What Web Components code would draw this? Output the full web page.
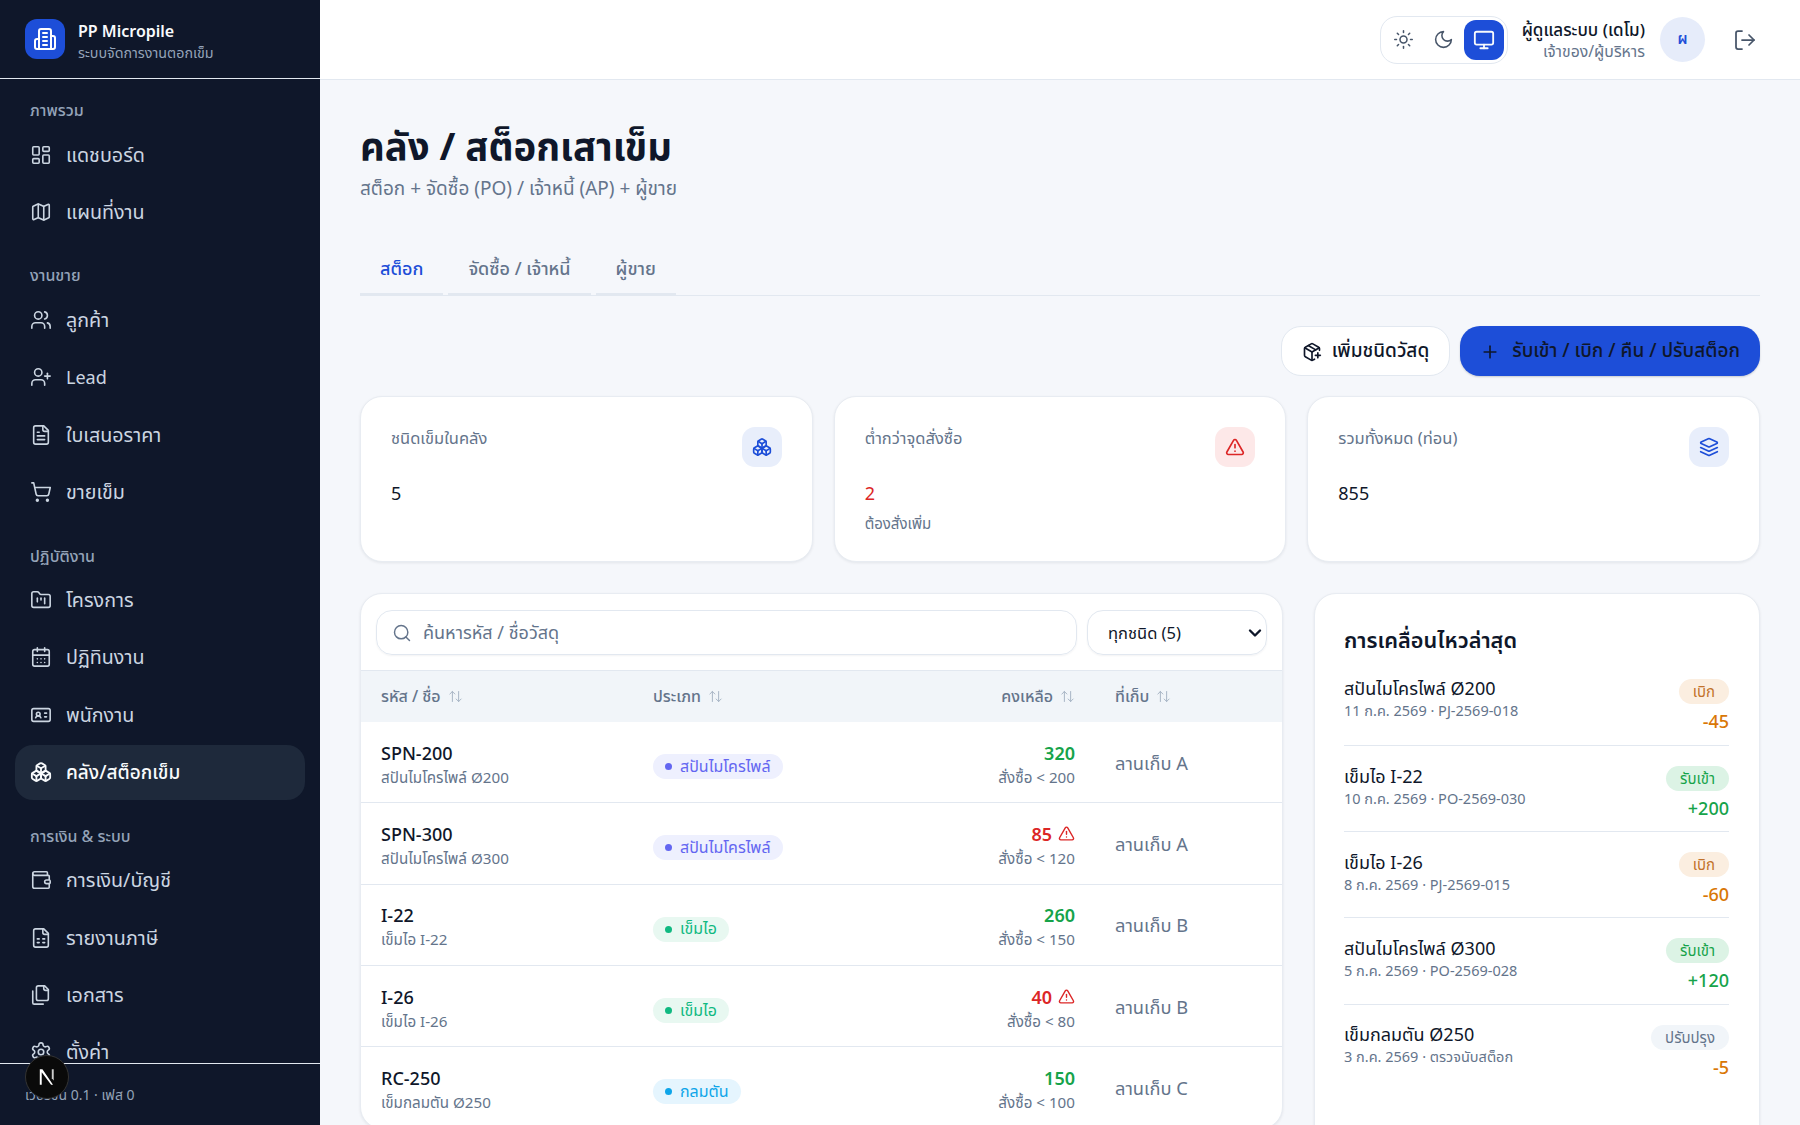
<!DOCTYPE html>
<html lang="th">
<head>
<meta charset="utf-8">
<title>คลัง / สต็อกเสาเข็ม</title>
<style>
html,body{margin:0;height:100%;overflow:hidden;}
body{font-family:"Noto Sans","Noto Sans Thai",sans-serif;color:#0f172a;background:#f5f7fb;}
</style>
</head>
<body>
<app-shell>
  <side-bar slot="side">
    <nav-group label="ภาพรวม">
      <nav-item icon="dashboard">แดชบอร์ด</nav-item>
      <nav-item icon="map">แผนที่งาน</nav-item>
    </nav-group>
    <nav-group label="งานขาย">
      <nav-item icon="users">ลูกค้า</nav-item>
      <nav-item icon="userplus" style="font-size:18px">Lead</nav-item>
      <nav-item icon="filetext">ใบเสนอราคา</nav-item>
      <nav-item icon="cart">ขายเข็ม</nav-item>
    </nav-group>
    <nav-group label="ปฏิบัติงาน">
      <nav-item icon="kanban">โครงการ</nav-item>
      <nav-item icon="calendar">ปฏิทินงาน</nav-item>
      <nav-item icon="idcard">พนักงาน</nav-item>
      <nav-item icon="boxes" active>คลัง/สต็อกเข็ม</nav-item>
    </nav-group>
    <nav-group label="การเงิน &amp; ระบบ">
      <nav-item icon="wallet">การเงิน/บัญชี</nav-item>
      <nav-item icon="sheet">รายงานภาษี</nav-item>
      <nav-item icon="files">เอกสาร</nav-item>
      <nav-item icon="settings">ตั้งค่า</nav-item>
    </nav-group>
  </side-bar>
  <top-bar slot="top"></top-bar>
  <page-head title="คลัง / สต็อกเสาเข็ม" sub="สต็อก + จัดซื้อ (PO) / เจ้าหนี้ (AP) + ผู้ขาย"></page-head>
  <tab-bar></tab-bar>
  <action-bar></action-bar>
  <kpi-row>
    <kpi-card label="ชนิดเข็มในคลัง" value="5" icon="boxes" tone="blue"></kpi-card>
    <kpi-card label="ต่ำกว่าจุดสั่งซื้อ" value="2" sub="ต้องสั่งเพิ่ม" icon="alert" tone="red"></kpi-card>
    <kpi-card label="รวมทั้งหมด (ท่อน)" value="855" icon="layers" tone="blue"></kpi-card>
  </kpi-row>
  <split-row>
    <stock-table>
      <stock-row code="SPN-200" name="สปันไมโครไพล์ Ø200" kind="สปันไมโครไพล์" tone="violet" qty="320" min="สั่งซื้อ &lt; 200" place="ลานเก็บ A"></stock-row>
      <stock-row code="SPN-300" name="สปันไมโครไพล์ Ø300" kind="สปันไมโครไพล์" tone="violet" qty="85" low min="สั่งซื้อ &lt; 120" place="ลานเก็บ A"></stock-row>
      <stock-row code="I-22" name="เข็มไอ I-22" kind="เข็มไอ" tone="green" qty="260" min="สั่งซื้อ &lt; 150" place="ลานเก็บ B"></stock-row>
      <stock-row code="I-26" name="เข็มไอ I-26" kind="เข็มไอ" tone="green" qty="40" low min="สั่งซื้อ &lt; 80" place="ลานเก็บ B"></stock-row>
      <stock-row code="RC-250" name="เข็มกลมตัน Ø250" kind="กลมตัน" tone="sky" qty="150" min="สั่งซื้อ &lt; 100" place="ลานเก็บ C"></stock-row>
    </stock-table>
    <move-list>
      <move-item name="สปันไมโครไพล์ Ø200" meta="11 ก.ค. 2569 · PJ-2569-018" tag="เบิก" tone="out" amount="-45"></move-item>
      <move-item name="เข็มไอ I-22" meta="10 ก.ค. 2569 · PO-2569-030" tag="รับเข้า" tone="in" amount="+200"></move-item>
      <move-item name="เข็มไอ I-26" meta="8 ก.ค. 2569 · PJ-2569-015" tag="เบิก" tone="out" amount="-60"></move-item>
      <move-item name="สปันไมโครไพล์ Ø300" meta="5 ก.ค. 2569 · PO-2569-028" tag="รับเข้า" tone="in" amount="+120"></move-item>
      <move-item name="เข็มกลมตัน Ø250" meta="3 ก.ค. 2569 · ตรวจนับสต็อก" tag="ปรับปรุง" tone="adj" amount="-5"></move-item>
    </move-list>
  </split-row>
</app-shell>

<script>
const ICONS = {
  dashboard:'<rect width="7" height="9" x="3" y="3" rx="1"/><rect width="7" height="5" x="14" y="3" rx="1"/><rect width="7" height="9" x="14" y="12" rx="1"/><rect width="7" height="5" x="3" y="16" rx="1"/>',
  map:'<path d="M14.106 5.553a2 2 0 0 0 1.788 0l3.659-1.83A1 1 0 0 1 21 4.619v12.764a1 1 0 0 1-.553.894l-4.553 2.277a2 2 0 0 1-1.788 0l-4.212-2.106a2 2 0 0 0-1.788 0l-3.659 1.83A1 1 0 0 1 3 19.381V6.618a1 1 0 0 1 .553-.894l4.553-2.277a2 2 0 0 1 1.788 0z"/><path d="M15 5.764v15"/><path d="M9 3.236v15"/>',
  users:'<path d="M16 21v-2a4 4 0 0 0-4-4H6a4 4 0 0 0-4 4v2"/><circle cx="9" cy="7" r="4"/><path d="M22 21v-2a4 4 0 0 0-3-3.87"/><path d="M16 3.13a4 4 0 0 1 0 7.75"/>',
  userplus:'<path d="M16 21v-2a4 4 0 0 0-4-4H6a4 4 0 0 0-4 4v2"/><circle cx="9" cy="7" r="4"/><line x1="19" x2="19" y1="8" y2="14"/><line x1="22" x2="16" y1="11" y2="11"/>',
  filetext:'<path d="M15 2H6a2 2 0 0 0-2 2v16a2 2 0 0 0 2 2h12a2 2 0 0 0 2-2V7Z"/><path d="M14 2v4a2 2 0 0 0 2 2h4"/><path d="M10 9H8"/><path d="M16 13H8"/><path d="M16 17H8"/>',
  cart:'<circle cx="8" cy="21" r="1"/><circle cx="19" cy="21" r="1"/><path d="M2.05 2.05h2l2.66 12.42a2 2 0 0 0 2 1.58h9.78a2 2 0 0 0 1.95-1.57l1.65-7.43H5.12"/>',
  kanban:'<path d="M4 20h16a2 2 0 0 0 2-2V8a2 2 0 0 0-2-2h-7.93a2 2 0 0 1-1.66-.9l-.82-1.2A2 2 0 0 0 7.93 3H4a2 2 0 0 0-2 2v13c0 1.1.9 2 2 2Z"/><path d="M8 10v4"/><path d="M12 10v2"/><path d="M16 10v6"/>',
  calendar:'<path d="M8 2v4"/><path d="M16 2v4"/><rect width="18" height="18" x="3" y="4" rx="2"/><path d="M3 10h18"/><path d="M8 14h.01"/><path d="M12 14h.01"/><path d="M16 14h.01"/><path d="M8 18h.01"/><path d="M12 18h.01"/><path d="M16 18h.01"/>',
  idcard:'<path d="M16 10h2"/><path d="M16 14h2"/><path d="M6.17 15a3 3 0 0 1 5.66 0"/><circle cx="9" cy="11" r="2"/><rect x="2" y="5" width="20" height="14" rx="2"/>',
  boxes:'<path d="M2.97 12.92A2 2 0 0 0 2 14.63v3.24a2 2 0 0 0 .97 1.71l3 1.8a2 2 0 0 0 2.06 0L12 19v-5.5l-5-3-4.03 2.42Z"/><path d="m7 16.5-4.74-2.85"/><path d="m7 16.5 5-3"/><path d="M7 16.5v5.17"/><path d="M12 13.5V19l3.97 2.38a2 2 0 0 0 2.06 0l3-1.8a2 2 0 0 0 .97-1.71v-3.24a2 2 0 0 0-.97-1.71L17 10.5l-5 3Z"/><path d="m17 16.5-5-3"/><path d="m17 16.5 4.74-2.85"/><path d="M17 16.5v5.17"/><path d="M7.97 4.42A2 2 0 0 0 7 6.13v4.37l5 3 5-3V6.13a2 2 0 0 0-.97-1.71l-3-1.8a2 2 0 0 0-2.06 0l-3 1.8Z"/><path d="M12 8 7.26 5.15"/><path d="m12 8 4.74-2.85"/><path d="M12 13.5V8"/>',
  wallet:'<path d="M19 7V4a1 1 0 0 0-1-1H5a2 2 0 0 0 0 4h15a1 1 0 0 1 1 1v4h-3a2 2 0 0 0 0 4h3a1 1 0 0 0 1-1v-2a1 1 0 0 0-1-1"/><path d="M3 5v14a2 2 0 0 0 2 2h15a1 1 0 0 0 1-1v-4"/>',
  sheet:'<path d="M15 2H6a2 2 0 0 0-2 2v16a2 2 0 0 0 2 2h12a2 2 0 0 0 2-2V7Z"/><path d="M14 2v4a2 2 0 0 0 2 2h4"/><path d="M8 13h2"/><path d="M14 13h2"/><path d="M8 17h2"/><path d="M14 17h2"/>',
  files:'<path d="M20 7h-3a2 2 0 0 1-2-2V2"/><path d="M9 18a2 2 0 0 1-2-2V4a2 2 0 0 1 2-2h7l4 4v10a2 2 0 0 1-2 2Z"/><path d="M3 7.6v12.8A1.6 1.6 0 0 0 4.6 22h9.8"/>',
  settings:'<path d="M12.22 2h-.44a2 2 0 0 0-2 2v.18a2 2 0 0 1-1 1.73l-.43.25a2 2 0 0 1-2 0l-.15-.08a2 2 0 0 0-2.73.73l-.22.38a2 2 0 0 0 .73 2.73l.15.1a2 2 0 0 1 1 1.72v.51a2 2 0 0 1-1 1.74l-.15.09a2 2 0 0 0-.73 2.73l.22.38a2 2 0 0 0 2.73.73l.15-.08a2 2 0 0 1 2 0l.43.25a2 2 0 0 1 1 1.73V20a2 2 0 0 0 2 2h.44a2 2 0 0 0 2-2v-.18a2 2 0 0 1 1-1.73l.43-.25a2 2 0 0 1 2 0l.15.08a2 2 0 0 0 2.73-.73l.22-.39a2 2 0 0 0-.73-2.73l-.15-.08a2 2 0 0 1-1-1.74v-.5a2 2 0 0 1 1-1.74l.15-.09a2 2 0 0 0 .73-2.73l-.22-.38a2 2 0 0 0-2.73-.73l-.15.08a2 2 0 0 1-2 0l-.43-.25a2 2 0 0 1-1-1.73V4a2 2 0 0 0-2-2z"/><circle cx="12" cy="12" r="3"/>',
  building:'<path d="M6 22V4a2 2 0 0 1 2-2h8a2 2 0 0 1 2 2v18Z"/><path d="M6 12H4a2 2 0 0 0-2 2v6a2 2 0 0 0 2 2h2"/><path d="M18 9h2a2 2 0 0 1 2 2v9a2 2 0 0 1-2 2h-2"/><path d="M10 6h4"/><path d="M10 10h4"/><path d="M10 14h4"/><path d="M10 18h4"/>',
  sun:'<circle cx="12" cy="12" r="4"/><path d="M12 2v2"/><path d="M12 20v2"/><path d="m4.93 4.93 1.41 1.41"/><path d="m17.66 17.66 1.41 1.41"/><path d="M2 12h2"/><path d="M20 12h2"/><path d="m6.34 17.66-1.41 1.41"/><path d="m19.07 4.93-1.41 1.41"/>',
  moon:'<path d="M12 3a6 6 0 0 0 9 9 9 9 0 1 1-9-9Z"/>',
  monitor:'<rect width="20" height="14" x="2" y="3" rx="2"/><line x1="8" x2="16" y1="21" y2="21"/><line x1="12" x2="12" y1="17" y2="21"/>',
  logout:'<path d="M9 21H5a2 2 0 0 1-2-2V5a2 2 0 0 1 2-2h4"/><polyline points="16 17 21 12 16 7"/><line x1="21" x2="9" y1="12" y2="12"/>',
  packageplus:'<path d="M16 16h6"/><path d="M19 13v6"/><path d="M21 10V8a2 2 0 0 0-1-1.73l-7-4a2 2 0 0 0-2 0l-7 4A2 2 0 0 0 3 8v8a2 2 0 0 0 1 1.73l7 4a2 2 0 0 0 2 0l2-1.14"/><path d="m7.5 4.27 9 5.15"/><polyline points="3.29 7 12 12 20.71 7"/><line x1="12" x2="12" y1="22" y2="12"/>',
  plus:'<path d="M5 12h14"/><path d="M12 5v14"/>',
  alert:'<path d="m21.73 18-8-14a2 2 0 0 0-3.48 0l-8 14A2 2 0 0 0 4 21h16a2 2 0 0 0 1.73-3"/><path d="M12 9v4"/><path d="M12 17h.01"/>',
  layers:'<path d="m12.83 2.18a2 2 0 0 0-1.66 0L2.6 6.08a1 1 0 0 0 0 1.83l8.58 3.91a2 2 0 0 0 1.66 0l8.58-3.9a1 1 0 0 0 0-1.83Z"/><path d="m22 17.65-9.17 4.16a2 2 0 0 1-1.66 0L2 17.65"/><path d="m22 12.65-9.17 4.16a2 2 0 0 1-1.66 0L2 12.65"/>',
  search:'<circle cx="11" cy="11" r="8"/><path d="m21 21-4.3-4.3"/>',
  sort:'<path d="m21 16-4 4-4-4"/><path d="M17 20V4"/><path d="m3 8 4-4 4 4"/><path d="M7 4v16"/>'
};

// small helper, every element below is just a shadow root + a string of markup
function svg(name, size, sw){
  return `<svg width="${size}" height="${size}" viewBox="0 0 24 24" fill="none" stroke="currentColor" stroke-width="${sw||2}" stroke-linecap="round" stroke-linejoin="round" style="display:block;flex:none">${ICONS[name]}</svg>`;
}

class Base extends HTMLElement{
  constructor(){
    super();
    this.attachShadow({mode:"open"});
  }
  connectedCallback(){
    this.shadowRoot.innerHTML = this.render();
  }
  a(n){ return this.getAttribute(n) || ""; }
}

class AppShell extends Base{
  render(){ return `<style>
    :host{display:grid;grid-template-columns:320px 1fr;grid-template-rows:80px 1fr;height:100vh;overflow:hidden;}
    .side{grid-row:1 / 3;min-height:0;display:flex}
    .top{min-width:0}
    main{min-height:0;overflow:hidden;padding:40px 40px 0;}
  </style>
  <div class="side"><slot name="side"></slot></div>
  <div class="top"><slot name="top"></slot></div>
  <main><slot></slot></main>`; }
}

class SideBar extends Base{
  render(){ return `<style>
    :host{display:flex;flex-direction:column;width:320px;height:100%;background:#0f172a;position:relative;}
    header{height:79px;box-sizing:border-box;flex:none;display:flex;align-items:center;gap:13px;padding:0 25px;border-bottom:1px solid #e2e8f0;}
    .logo{width:40px;height:40px;border-radius:12px;background:#1d4ed8;color:#fff;display:flex;align-items:center;justify-content:center;}
    .txt{padding-top:3px}
    .t{font-size:16px;font-weight:600;color:#f8fafc;line-height:23px;}
    .s{font-size:14.3px;color:#94a3b8;line-height:19px;}
    nav{flex:1;min-height:0;overflow:hidden;padding:19px 15px 0;}
    footer{height:62px;flex:none;box-sizing:border-box;border-top:1px solid #e2e8f0;padding:16px 25px 0;font-size:14px;line-height:30px;color:#94a3b8;}
    .n{position:absolute;left:25px;top:1055px;width:44px;height:44px;border-radius:50%;background:#0a0a0a;border:1px solid #333;box-sizing:border-box;display:flex;align-items:center;justify-content:center;}
  </style>
  <header><div class="logo">${svg("building",24)}</div><div class="txt"><div class="t">PP Micropile</div><div class="s">ระบบจัดการงานตอกเข็ม</div></div></header>
  <nav><slot></slot></nav>
  <footer>เวอร์ชัน 0.1 · เฟส 0</footer>
  <div class="n"><svg width="24" height="24" viewBox="0 0 20 20"><path d="M4 3.5h2.2L15 16.5h-1.6L5.6 6v10.5H4z" fill="#fff"/><path d="M14 3.5h1.6v9.5L14 11z" fill="#ccc"/></svg></div>`; }
}

class NavGroup extends Base{
  render(){ return `<style>
    :host{display:block;margin-bottom:24px;}
    .l{font-size:16px;font-weight:500;line-height:24px;color:#94a3b8;padding-left:15px;margin-bottom:5px;}
    .i{display:flex;flex-direction:column;gap:2.4px;}
  </style><div class="l">${this.a("label")}</div><div class="i"><slot></slot></div>`; }
}

class NavItem extends Base{
  render(){
    const on = this.hasAttribute("active");
    return `<style>
    :host{display:flex;align-items:center;gap:14px;height:55px;padding:0 15px;border-radius:18px;font-size:${on?19:19.7}px;line-height:28px;
      color:${on?"#f8fafc":"#cbd5e1"};background:${on?"#1e293b":"transparent"};font-weight:${on?500:400};}
  </style>${svg(this.a("icon"),22,on?2:1.75)}<span><slot></slot></span>`; }
}

class TopBar extends Base{
  render(){ return `<style>
    :host{display:flex;align-items:center;justify-content:flex-end;height:80px;box-sizing:border-box;background:#fff;border-bottom:1px solid #e2e8f0;padding:0 43px 0 0;}
    .theme{display:flex;align-items:center;padding:3px;height:48px;box-sizing:border-box;border:1px solid #e2e8f0;border-radius:17px;color:#475569;background:#fff;}
    .theme span{width:40px;height:40px;display:flex;align-items:center;justify-content:center;border-radius:12px;}
    .theme .on{background:#1d4ed8;color:#f8fafc;}
    .who{text-align:right;margin-left:14px;}
    .who b{display:block;font-size:17px;font-weight:500;line-height:23px;color:#0f172a;}
    .who i{display:block;font-style:normal;font-size:15.8px;line-height:21px;color:#64748b;}
    .av{width:45px;height:45px;border-radius:50%;background:#e6ecfa;color:#1d4ed8;font-size:15px;font-weight:600;display:flex;align-items:center;justify-content:center;margin-left:15px;}
    .out{margin-left:28px;color:#475569;}
  </style>
  <div class="theme"><span>${svg("sun",21,1.75)}</span><span>${svg("moon",21,1.75)}</span><span class="on">${svg("monitor",22)}</span></div>
  <div class="who"><b>ผู้ดูแลระบบ (เดโม)</b><i>เจ้าของ/ผู้บริหาร</i></div>
  <div class="av">ผ</div>
  <div class="out">${svg("logout",24,1.75)}</div>`; }
}

class PageHead extends Base{
  render(){ return `<style>
    :host{display:block;}
    h1{margin:0;font-size:38.3px;font-weight:700;line-height:50px;color:#0f172a;}
    p{margin:4px 0 0;font-size:19px;line-height:28px;color:#64748b;}
  </style><h1>${this.a("title")}</h1><p>${this.a("sub")}</p>`; }
}

class TabBar extends Base{
  render(){ return `<style>
    :host{display:flex;gap:5px;height:51px;margin-top:43px;box-shadow:inset 0 -1px 0 #e2e8f0;}
    div{padding:0 20px;font-size:18px;line-height:47px;color:#64748b;font-weight:500;height:48px;border-bottom:3px solid #e2e8f0;}
    .on{color:#1d4ed8;}
  </style><div class="on">สต็อก</div><div>จัดซื้อ / เจ้าหนี้</div><div>ผู้ขาย</div>`; }
}

class ActionBar extends Base{
  render(){ return `<style>
    :host{display:flex;justify-content:flex-end;gap:10px;margin-top:30px;}
    div{display:flex;align-items:center;height:50px;box-sizing:border-box;border-radius:20px;font-size:19px;font-weight:500;white-space:nowrap;padding-top:1px;}
    .a{background:#fff;border:1px solid #e2e8f0;padding-left:20px;padding-right:20px;gap:10px;color:#0f172a;}
    .b{background:#1d4ed8;padding-left:20px;padding-right:20px;gap:12px;color:#0f172a;box-shadow:0 1px 2px rgba(15,23,42,.2);}
  </style><div class="a">${svg("packageplus",20)}เพิ่มชนิดวัสดุ</div><div class="b">${svg("plus",20)}รับเข้า / เบิก / คืน / ปรับสต็อก</div>`; }
}

class KpiRow extends Base{
  render(){ return `<style>
    :host{display:grid;grid-template-columns:repeat(3,1fr);gap:21px;margin-top:20px;}
  </style><slot></slot>`; }
}

class KpiCard extends Base{
  render(){
    const red = this.a("tone")=="red";
    return `<style>
    :host{display:flex;justify-content:space-between;align-items:flex-start;box-sizing:border-box;height:166px;padding:29px 30px;background:#fff;border:1px solid #e8ecf2;border-radius:22px;box-shadow:0 1px 3px rgba(15,23,42,.08);}
    .l{font-size:16.5px;line-height:24px;color:#64748b;}
    .v{font-size:18px;line-height:28px;margin-top:29px;color:${red?"#dc2626":"#0f172a"};}
    .s{font-size:15px;line-height:22px;margin-top:5px;color:#64748b;}
    .i{width:40px;height:40px;margin-top:1px;border-radius:13px;display:flex;align-items:center;justify-content:center;background:${red?"#fde8e8":"#e8eefb"};color:${red?"#dc2626":"#1d4ed8"};}
  </style><div><div class="l">${this.a("label")}</div><div class="v">${this.a("value")}</div>${this.a("sub")?`<div class="s">${this.a("sub")}</div>`:""}</div><div class="i">${svg(this.a("icon"),20)}</div>`; }
}

class SplitRow extends Base{
  render(){ return `<style>
    :host{display:grid;grid-template-columns:923px 446px;gap:31px;margin-top:31px;align-items:start;}
  </style><slot></slot>`; }
}

class StockTable extends Base{
  render(){
    const th = (t,c)=>`<div class="${c||""}">${t}${svg("sort",15,1.5)}</div>`;
    return `<style>
    :host{display:block;background:#fff;border:1px solid #e8ecf2;border-radius:22px;box-shadow:0 1px 3px rgba(15,23,42,.08);overflow:hidden;}
    .bar{display:flex;gap:10px;padding:16px 15px 0;height:77px;box-sizing:border-box;border-bottom:1px solid #e2e8f0;}
    .in{flex:1;display:flex;align-items:center;gap:11px;padding:2px 15px 0;border:1px solid #e2e8f0;border-radius:16px;color:#64748b;font-size:18px;height:45px;box-sizing:border-box;box-shadow:0 1px 2px rgba(15,23,42,.05);}
    .in svg{margin-top:-2px}
    .sel{width:180px;height:45px;box-sizing:border-box;display:flex;align-items:center;justify-content:space-between;padding:2px 3px 0 20px;border:1px solid #e2e8f0;border-radius:16px;font-size:16.5px;color:#0f172a;box-shadow:0 1px 2px rgba(15,23,42,.05);}
    .sel svg{margin-top:-2px}
    .head{display:grid;grid-template-columns:272px 1fr 150px 187px;height:51px;align-items:center;background:#f1f5f9;color:#64748b;font-size:16px;font-weight:500;}
    .head div{display:flex;align-items:center;gap:7px;padding:0 20px;}
    .head svg{color:#a3b1c2}
    .head .r{justify-content:flex-end;}
  </style>
  <div class="bar">
    <div class="in">${svg("search",20,1.75)}ค้นหารหัส / ชื่อวัสดุ</div>
    <div class="sel">ทุกชนิด (5)<svg width="16" height="16" viewBox="0 0 16 16" fill="none" stroke="#0f172a" stroke-width="2.4" stroke-linecap="round" stroke-linejoin="round"><path d="M3 5.5 8 10.5 13 5.5"/></svg></div>
  </div>
  <div class="head">${th("รหัส / ชื่อ")}${th("ประเภท")}${th("คงเหลือ","r")}${th("ที่เก็บ")}</div>
  <slot></slot>`; }
}

const KIND = {
  violet:["#eef0fe","#6366f1"],
  green:["#e8f8f1","#10b981"],
  sky:["#e5f5fe","#0ea5e9"]
};

class StockRow extends Base{
  render(){
    const low = this.hasAttribute("low");
    const k = KIND[this.a("tone")];
    return `<style>
    :host{display:grid;grid-template-columns:272px 1fr 150px 187px;height:81.3px;box-sizing:border-box;padding-top:3px;align-items:center;border-bottom:1px solid #e2e8f0;}
    :host>div{padding:0 20px;}
    .c{font-size:18px;line-height:26px;font-weight:500;color:#0f172a;}
    .n,.m{font-size:15.2px;line-height:22px;color:#64748b;white-space:nowrap;}
    .b{display:inline-flex;align-items:center;gap:8px;height:25px;margin-top:6px;padding:0 12px;border-radius:13px;background:${k[0]};color:${k[1]};font-size:16px;font-weight:400;}
    .b i{width:7px;height:7px;border-radius:50%;background:${k[1]};}
    .q{text-align:right;}
    .v{display:flex;justify-content:flex-end;align-items:center;gap:6px;font-size:18px;line-height:26px;font-weight:600;color:${low?"#dc2626":"#16a34a"};}
    .p{font-size:18.3px;color:#64748b;}
  </style>
  <div><div class="c">${this.a("code")}</div><div class="n">${this.a("name")}</div></div>
  <div><span class="b"><i></i>${this.a("kind")}</span></div>
  <div class="q"><div class="v">${this.a("qty")}${low?svg("alert",17):""}</div><div class="m">${this.a("min")}</div></div>
  <div class="p">${this.a("place")}</div>`; }
}

class MoveList extends Base{
  render(){ return `<style>
    :host{display:block;box-sizing:border-box;height:600px;padding:30px 30px 0 29px;background:#fff;border:1px solid #e8ecf2;border-radius:22px;box-shadow:0 1px 3px rgba(15,23,42,.08);}
    h3{margin:0 0 19px;font-size:21.7px;line-height:32px;font-weight:600;color:#0f172a;}
  </style><h3>การเคลื่อนไหวล่าสุด</h3><slot></slot>`; }
}

const MOVE = {
  out:["#fbeee0","#c2722a","#d97706"],
  in:["#dcf3e5","#16a34a","#16a34a"],
  adj:["#f1f5f9","#64748b","#d97706"]
};

class MoveItem extends Base{
  render(){
    const m = MOVE[this.a("tone")];
    return `<style>
    :host{display:flex;justify-content:space-between;height:86.2px;box-sizing:border-box;padding-top:16.5px;border-bottom:1px solid #e2e8f0;}
    :host(:first-of-type){height:71px;padding-top:0;}
    :host(:last-of-type){border-bottom:0;}
    .n{font-size:18px;line-height:26px;color:#0f172a;}
    .d{font-size:14.5px;line-height:19px;color:#64748b;}
    .r{display:flex;flex-direction:column;align-items:flex-end;gap:4px;margin-top:3.5px;}
    .t{height:25px;line-height:25px;padding:0 14px;border-radius:13px;background:${m[0]};color:${m[1]};font-size:15px;font-weight:400;}
    .a{font-size:18px;line-height:26px;font-weight:500;color:${m[2]};}
  </style><div><div class="n">${this.a("name")}</div><div class="d">${this.a("meta")}</div></div>
  <div class="r"><div class="t">${this.a("tag")}</div><div class="a">${this.a("amount")}</div></div>`; }
}

customElements.define("app-shell", AppShell);
customElements.define("side-bar", SideBar);
customElements.define("nav-group", NavGroup);
customElements.define("nav-item", NavItem);
customElements.define("top-bar", TopBar);
customElements.define("page-head", PageHead);
customElements.define("tab-bar", TabBar);
customElements.define("action-bar", ActionBar);
customElements.define("kpi-row", KpiRow);
customElements.define("kpi-card", KpiCard);
customElements.define("split-row", SplitRow);
customElements.define("stock-table", StockTable);
customElements.define("stock-row", StockRow);
customElements.define("move-list", MoveList);
customElements.define("move-item", MoveItem);
</script>
</body>
</html>
